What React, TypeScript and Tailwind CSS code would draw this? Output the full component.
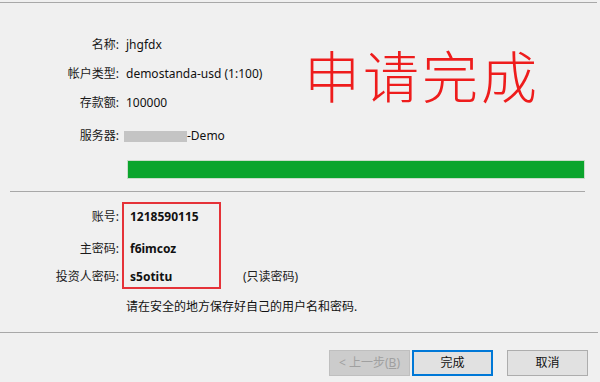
import React from "react";

const font = { fontFamily: '"Noto Sans", "Noto Sans CJK SC", sans-serif' };

function Row({ label, children, h }: { label: string; children: React.ReactNode; h: string }) {
  return (
    <div className={`flex items-center ${h}`}>
      <div className="w-[119px] text-right shrink-0 text-[#1a1a1a]">{label}</div>
      <div className="pl-[7px] flex items-center">{children}</div>
    </div>
  );
}

export default function App() {
  return (
    <div
      className="w-[600px] h-[382px] bg-[#f0f0f0] text-[12px] leading-none text-[#111] overflow-hidden flex flex-col"
      style={font}
    >
      <div className="h-[2px] shrink-0" />
      <div className="h-px bg-[#a8a8a8] mr-[3px] shrink-0" />
      <div className="relative shrink-0">
        <div className="pt-[27px] flex flex-col">
          <Row label="名称:" h="h-[29px]">jhgfdx</Row>
          <Row label="帐户类型:" h="h-[29px]">demostanda-usd (1:100)</Row>
          <Row label="存款额:" h="h-[29px]">100000</Row>
          <Row label="服务器:" h="h-[35px] pt-[3px]">
            <span className="flex items-center">
              <span className="inline-block w-[63px] h-[11px] bg-[#c4c4c4] ml-[-2px]" />
              <span>-Demo</span>
            </span>
          </Row>
        </div>
        <div className="absolute left-[304px] top-[43px] text-[56px] leading-none font-extralight text-[#ee1c1c] tracking-[3px]" style={{ fontFamily: '"Noto Sans CJK SC", sans-serif' }}>
          申请完成
        </div>
        <div className="ml-[127px] mr-[15px] mt-[8px] h-[19px] bg-[#0aa52c] border border-[#c8dcc8]" />
      </div>
      <div className="h-px bg-[#a8a8a8] ml-[10px] mr-[15px] mt-[12px] shrink-0" />
      <div className="relative shrink-0">
        <div className="pt-[10px] flex flex-col">
          <Row label="账号:" h="h-[29px]"><span className="font-bold pl-[4px]">1218590115</span></Row>
          <Row label="主密码:" h="h-[31px] pt-[4px]"><span className="font-bold pl-[4px]">f6imcoz</span></Row>
          <Row label="投资人密码:" h="h-[30px]">
            <span className="font-bold w-[117px] pl-[4px]">s5otitu</span>
            <span className="text-[#222]">(只读密码)</span>
          </Row>
          <div className="pl-[126px] h-[30px] flex items-center">请在安全的地方保存好自己的用户名和密码.</div>
        </div>
        <div className="absolute left-[122px] top-[10px] w-[99px] h-[87px] border-2 border-[#e53238]" />
      </div>
      <div className="h-px bg-[#a8a8a8] mt-[10px] mr-[2px] shrink-0" />
      <div className="flex justify-end pr-[12px] pt-[17px] shrink-0">
        <div className="w-[81px] h-[26px] flex items-center justify-center bg-[#cccccc] border border-[#bfbfbf] text-[#a0a0a0]">
          &lt; 上一步(<span className="underline">B</span>)
        </div>
        <div className="w-[81px] h-[26px] ml-[2px] flex items-center justify-center bg-[#e1e1e1] border-2 border-[#0078d7] text-[#111]">
          完成
        </div>
        <div className="w-[81px] h-[26px] ml-[14px] flex items-center justify-center bg-[#e1e1e1] border border-[#adadad] text-[#111]">
          取消
        </div>
      </div>
    </div>
  );
}
